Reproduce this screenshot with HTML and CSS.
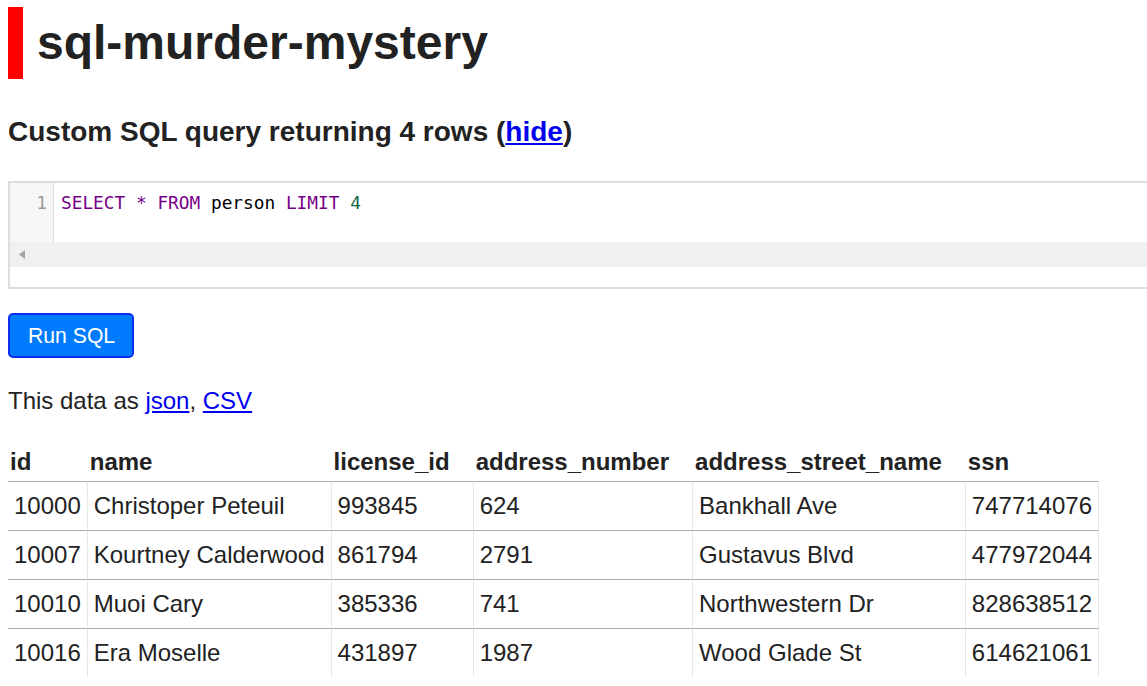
FILE: index.html
```html
<!DOCTYPE html>
<html lang="en">
<head>
<meta charset="utf-8">
<title>sql-murder-mystery: SELECT * FROM person LIMIT 4</title>
<link rel="stylesheet" href="styles.css">
</head>
<body>
<h1 class="title">sql-murder-mystery</h1>

<h2 class="subtitle">Custom SQL query returning 4 rows (<a href="#">hide</a>)</h2>

<div class="editor">
  <div class="editor-main">
    <div class="gutter"><span class="lineno">1</span></div>
    <div class="code"><span class="kw">SELECT</span> <span class="op">*</span> <span class="kw">FROM</span> person <span class="kw">LIMIT</span> <span class="num">4</span></div>
  </div>
  <div class="hscroll">
    <svg class="arrow" width="6" height="9" viewBox="0 0 6 9"><polygon points="6,0 6,9 0,4.5" fill="#a3a3a3"/></svg>
  </div>
  <div class="editor-foot"></div>
</div>

<div class="actions">
  <button class="run" type="button">Run SQL</button>
</div>

<p class="export">This data as <a href="#">json</a>, <a href="#">CSV</a></p>

<table class="rows">
  <thead>
    <tr>
      <th>id</th><th>name</th><th>license_id</th><th>address_number</th><th>address_street_name</th><th>ssn</th>
    </tr>
  </thead>
  <tbody>
    <tr><td>10000</td><td>Christoper Peteuil</td><td>993845</td><td>624</td><td>Bankhall Ave</td><td>747714076</td></tr>
    <tr><td>10007</td><td>Kourtney Calderwood</td><td>861794</td><td>2791</td><td>Gustavus Blvd</td><td>477972044</td></tr>
    <tr><td>10010</td><td>Muoi Cary</td><td>385336</td><td>741</td><td>Northwestern Dr</td><td>828638512</td></tr>
    <tr><td>10016</td><td>Era Moselle</td><td>431897</td><td>1987</td><td>Wood Glade St</td><td>614621061</td></tr>
  </tbody>
</table>
</body>
</html>
```

FILE: styles.css
```css
html {
  overflow: hidden;
}
body {
  margin: 0 0 0 8px;
  padding-top: 7px;
  font-family: "Liberation Sans", Arial, Helvetica, sans-serif;
  font-size: 24px;
  line-height: 1.5;
  color: #222;
  background: #fff;
}
a {
  color: #0000ee;
  text-decoration: underline;
}
.title {
  margin: 0 0 32px;
  font-size: 48px;
  line-height: 72px;
  font-weight: bold;
  border-left: 15px solid #ff0000;
  padding-left: 14px;
}
.subtitle {
  margin: 0 0 28px;
  font-size: 28px;
  line-height: 42px;
  font-weight: bold;
}
.editor {
  border: 2px solid #dddddd;
  border-right: none;
  margin-bottom: 24px;
  background: #fff;
}
.editor-main {
  display: flex;
  height: 59px;
}
.gutter {
  width: 43px;
  background: #f7f7f7;
  border-right: 1px solid #dddddd;
  padding-top: 6px;
  text-align: right;
  box-sizing: content-box;
}
.lineno {
  display: block;
  padding-right: 6px;
  font-family: "DejaVu Sans Mono", "Liberation Mono", monospace;
  font-size: 17.8px;
  line-height: 27px;
  color: #999;
}
.code {
  padding: 6px 0 0 7px;
  font-family: "DejaVu Sans Mono", "Liberation Mono", monospace;
  font-size: 17.8px;
  line-height: 27px;
  color: #000;
  white-space: pre;
}
.kw, .op {
  color: #770088;
}
.num {
  color: #116644;
}
.hscroll {
  height: 25px;
  background: #f0f0f0;
  display: flex;
  align-items: center;
  padding-left: 9px;
}
.arrow {
  display: block;
}
.editor-foot {
  height: 20px;
}
.actions {
  margin-bottom: 25px;
}
.run {
  display: block;
  height: 45px;
  padding: 0 17px 0 18px;
  background: #007bff;
  color: #fff;
  border: 2px solid #0a2ef0;
  border-radius: 5px;
  font-family: "Liberation Sans", Arial, Helvetica, sans-serif;
  font-size: 21.2px;
  line-height: 1;
  cursor: pointer;
}
.export {
  margin: 0 0 25px;
}
.rows {
  border-collapse: separate;
  border-spacing: 0;
}
.rows th {
  text-align: left;
  font-weight: bold;
  padding: 0 24px 1px 2px;
  line-height: 36px;
  white-space: nowrap;
}
.rows td {
  border-top: 1px solid #aaaaaa;
  border-right: 1px solid #e8e8e8;
  padding: 6px;
  line-height: 36px;
  white-space: nowrap;
}
```
